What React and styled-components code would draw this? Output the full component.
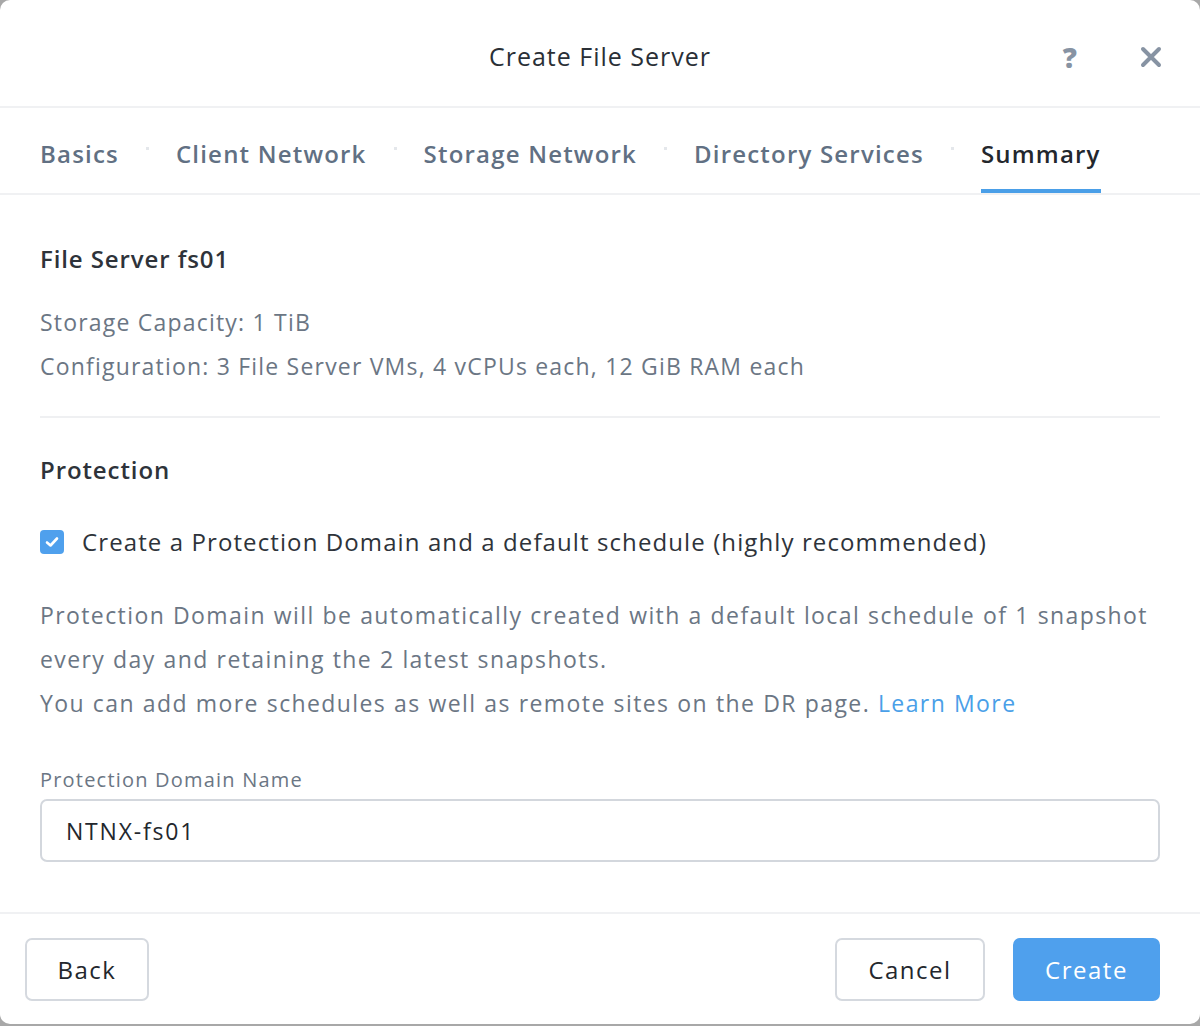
import React from 'react'
import styled, { createGlobalStyle } from 'styled-components'

const GlobalStyle = createGlobalStyle`
  html, body {
    margin: 0;
    padding: 0;
    background: #a8a8a8;
  }
  body {
    font-family: "Open Sans", Lato, sans-serif;
  }
`

const Dialog = styled.div`
  width: 1200px;
  height: 1024px;
  background: #fff;
  border-radius: 10px;
  display: flex;
  flex-direction: column;
  overflow: hidden;
`

const Header = styled.div`
  height: 108px;
  border-bottom: 2px solid #f0f1f3;
  display: flex;
  align-items: center;
  justify-content: center;
  position: relative;
  box-sizing: border-box;
`

const Title = styled.h1`
  margin: 0;
  padding-top: 5px;
  font-size: 25px;
  font-weight: 400;
  letter-spacing: 1px;
  color: #2a2f36;
`

const HeaderIcons = styled.div`
  position: absolute;
  right: 38px;
  top: 42px;
  display: flex;
  align-items: center;
  gap: 63px;
`

const IconButton = styled.span`
  color: #8793a3;
  font-size: 28px;
  font-weight: 800;
  line-height: 30px;
  display: flex;
  align-items: center;
`

const Tabs = styled.div`
  height: 87px;
  border-bottom: 2px solid #f0f1f3;
  display: flex;
  align-items: stretch;
  padding-left: 40px;
  box-sizing: border-box;
`

const Tab = styled.div`
  display: flex;
  align-items: center;
  font-size: 24px;
  font-weight: 600;
  letter-spacing: 1.2px;
  color: ${p => (p.$active ? '#23272d' : '#617083')};
  border-bottom: 4px solid ${p => (p.$active ? '#4a9fe8' : 'transparent')};
  padding-top: 10px;
  box-sizing: border-box;
`

const Dot = styled.span`
  width: 3px;
  height: 3px;
  background: #e4e7eb;
  margin: 0 27px;
  align-self: center;
  margin-top: -4px;
`

const Body = styled.div`
  flex: 1;
  padding: 0 40px;
  display: flex;
  flex-direction: column;
`

const SectionTitle = styled.h2`
  margin: 0;
  font-size: 24px;
  font-weight: 600;
  letter-spacing: 0.9px;
  color: #2e333a;
`

const Info = styled.p`
  margin: 0;
  font-size: 23px;
  line-height: 44px;
  letter-spacing: ${p => (p.$wide ? 1.4 : 1.2)}px;
  word-spacing: ${p => (p.$wide ? 0.5 : 0)}px;
  color: #6b7684;
`

const Divider = styled.hr`
  border: none;
  height: 2px;
  background: #eff0f2;
  margin: 0;
`

const CheckRow = styled.label`
  display: flex;
  align-items: center;
  gap: 18px;
  font-size: 24px;
  letter-spacing: 1.1px;
  color: #2e333a;
`

const CheckBox = styled.span`
  width: 24px;
  height: 24px;
  border-radius: 4px;
  background: #4fa0ed;
  display: flex;
  align-items: center;
  justify-content: center;
`

const Link = styled.a`
  color: #4a9fe8;
  text-decoration: none;
`

const FieldLabel = styled.div`
  font-size: 20px;
  letter-spacing: 1.2px;
  color: #6b7684;
  margin-bottom: 6px;
`

const Input = styled.input`
  width: 100%;
  height: 63px;
  box-sizing: border-box;
  border: 2px solid #d3d7dd;
  border-radius: 7px;
  padding: 0 24px;
  font-family: inherit;
  font-size: 23px;
  letter-spacing: 1.8px;
  color: #23272d;
  outline: none;
`

const Footer = styled.div`
  height: 112px;
  border-top: 2px solid #f0f1f3;
  box-sizing: border-box;
  display: flex;
  align-items: center;
  padding: 0 40px 0 25px;
  gap: 28px;
`

const Spacer = styled.div`
  flex: 1;
`

const Button = styled.button`
  height: 63px;
  width: ${p => p.$w}px;
  border-radius: 7px;
  font-family: inherit;
  font-size: 24px;
  letter-spacing: 1.5px;
  border: 2px solid ${p => (p.$primary ? '#4fa0ed' : '#d5d9df')};
  background: ${p => (p.$primary ? '#4fa0ed' : '#fff')};
  color: ${p => (p.$primary ? '#fff' : '#23272d')};
`

const Gap = styled.div`
  height: ${p => p.$h}px;
  flex-shrink: 0;
`

const tabs = ['Basics', 'Client Network', 'Storage Network', 'Directory Services', 'Summary']

const App = () => {
  return (
    <>
      <GlobalStyle />
      <Dialog>
        <Header>
          <Title>Create File Server</Title>
          <HeaderIcons>
            <IconButton>?</IconButton>
            <IconButton>
              <svg width="22" height="22" viewBox="0 0 22 22">
                <path d="M3 3 L19 19 M19 3 L3 19" stroke="#8793a3" strokeWidth="4" strokeLinecap="round" />
              </svg>
            </IconButton>
          </HeaderIcons>
        </Header>
        <Tabs>
          {tabs.map((t, i) => (
            <React.Fragment key={t}>
              {i > 0 && <Dot />}
              <Tab $active={t === 'Summary'}>{t}</Tab>
            </React.Fragment>
          ))}
        </Tabs>
        <Body>
          <Gap $h={47} />
          <SectionTitle>File Server fs01</SectionTitle>
          <Gap $h={25} />
          <Info>Storage Capacity: 1 TiB</Info>
          <Info>Configuration: 3 File Server VMs, 4 vCPUs each, 12 GiB RAM each</Info>
          <Gap $h={28} />
          <Divider />
          <Gap $h={35} />
          <SectionTitle>Protection</SectionTitle>
          <Gap $h={39} />
          <CheckRow>
            <CheckBox>
              <svg width="14" height="12" viewBox="0 0 14 12">
                <path d="M2 6.5 L5.5 9.5 L12 2.5" stroke="#fff" strokeWidth="2.6" fill="none" strokeLinecap="round" strokeLinejoin="round" />
              </svg>
            </CheckBox>
            Create a Protection Domain and a default schedule (highly recommended)
          </CheckRow>
          <Gap $h={35} />
          <Info $wide>
            Protection Domain will be automatically created with a default local schedule of 1 snapshot
            every day and retaining the 2 latest snapshots.
            <br />
            You can add more schedules as well as remote sites on the DR page. <Link href="#">Learn More</Link>
          </Info>
          <Gap $h={41} />
          <FieldLabel>Protection Domain Name</FieldLabel>
          <Input defaultValue="NTNX-fs01" />
        </Body>
        <Footer>
          <Button $w={124}>Back</Button>
          <Spacer />
          <Button $w={150}>Cancel</Button>
          <Button $w={147} $primary>Create</Button>
        </Footer>
      </Dialog>
    </>
  )
}

export default App
